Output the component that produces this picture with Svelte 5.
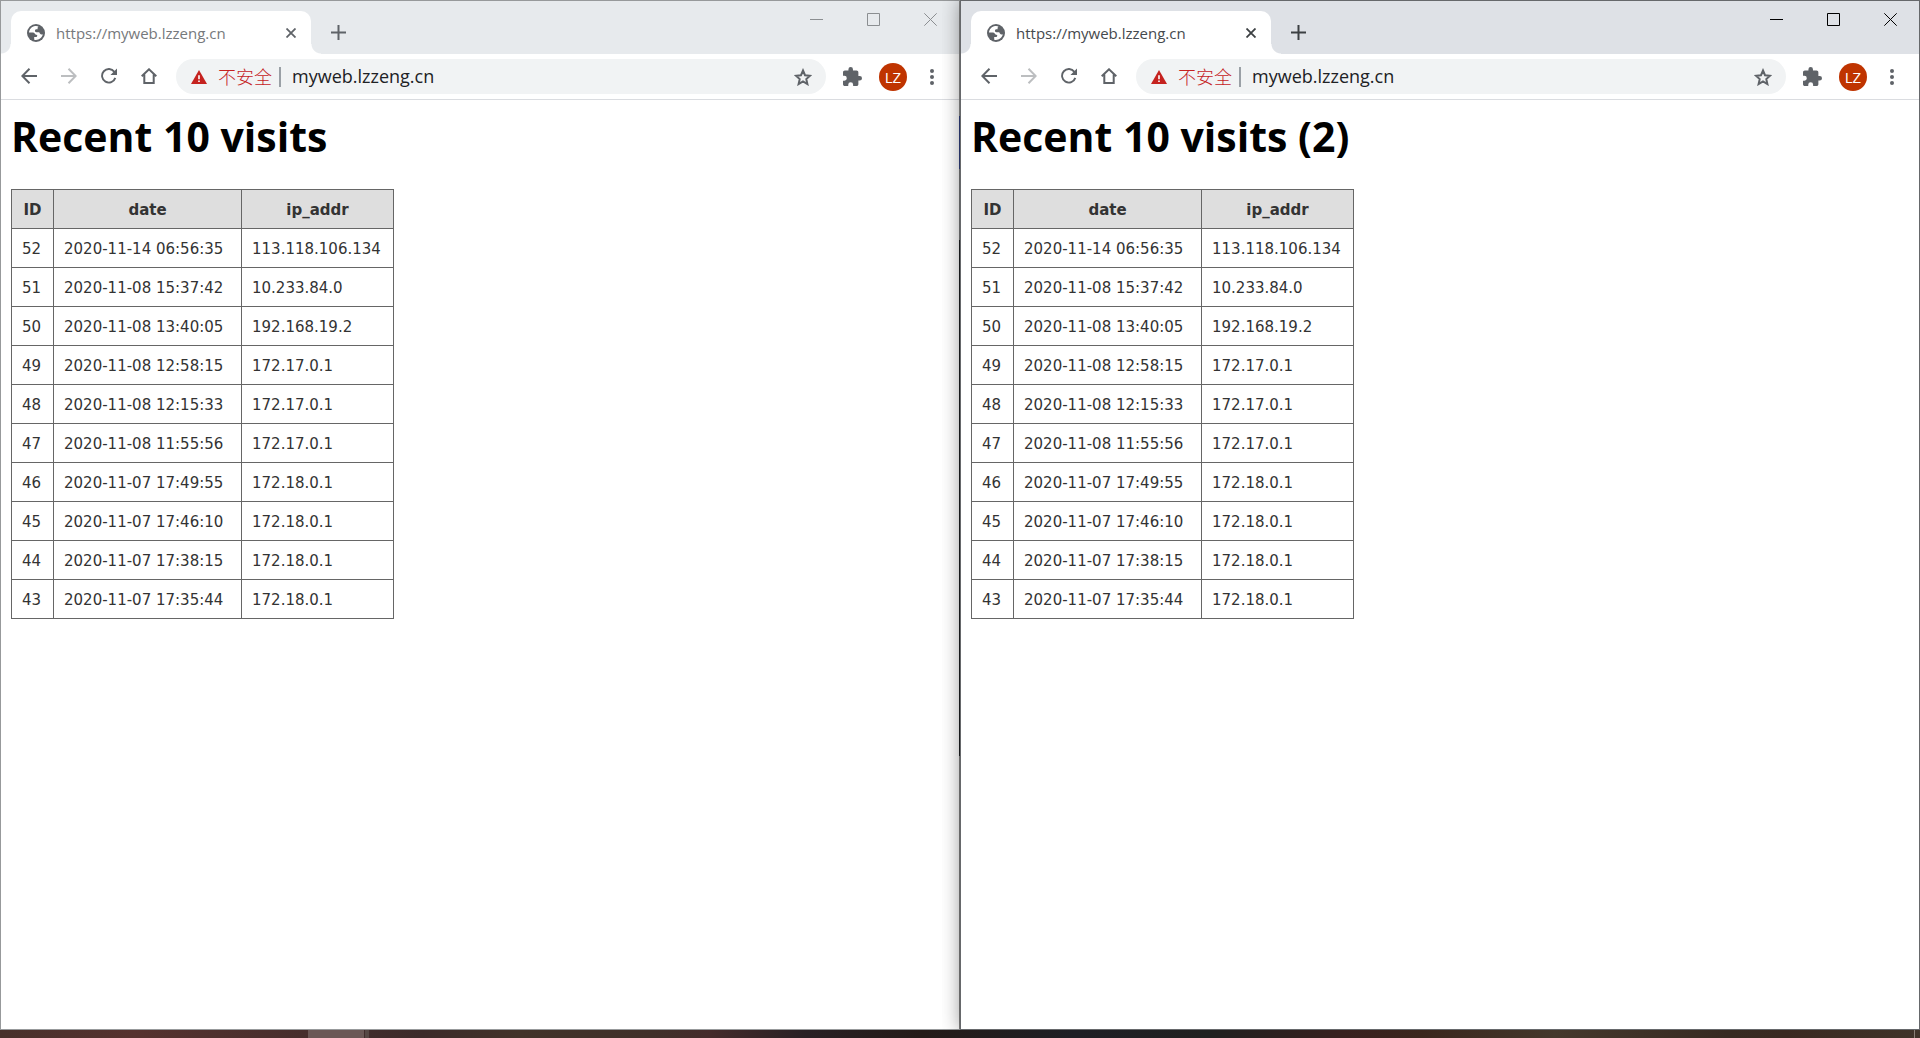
<script>
  const visits = [
    [52, '2020-11-14 06:56:35', '113.118.106.134'],
    [51, '2020-11-08 15:37:42', '10.233.84.0'],
    [50, '2020-11-08 13:40:05', '192.168.19.2'],
    [49, '2020-11-08 12:58:15', '172.17.0.1'],
    [48, '2020-11-08 12:15:33', '172.17.0.1'],
    [47, '2020-11-08 11:55:56', '172.17.0.1'],
    [46, '2020-11-07 17:49:55', '172.18.0.1'],
    [45, '2020-11-07 17:46:10', '172.18.0.1'],
    [44, '2020-11-07 17:38:15', '172.18.0.1'],
    [43, '2020-11-07 17:35:44', '172.18.0.1'],
  ];
  const windows = [
    { id: 'first', title: 'Recent 10 visits', active: false },
    { id: 'second', title: 'Recent 10 visits (2)', active: true },
  ];
</script>

<div class="desktop">
  <div class="windows">
    {#each windows as win (win.id)}
      <section class="window" class:active={win.active} aria-label={win.title}>
        <div class="tabstrip">
          <div class="tab">
            <svg class="globe" viewBox="0 0 18 18" aria-hidden="true">
              <circle cx="9" cy="9" r="9" fill="#5f6368" />
              <path fill="#fff" d="M8.200 2.100C4.900 2.500 2.200 5.300 2 8.600h3.400c1.200 0 2.400.6 2.800 1.700.3.500 1.900.2 2.100 1.200.1.900-.5 1.500-1.400 1.500H7.200v2.700c3.900 1 7.900-1.600 8.600-5.500l-.7.200c-1 .2-1.700-.2-2.200-1l-.7-1.100H9.500C8.400 8.300 7.900 7.600 8 6.600c0-.8.600-1.400 1.400-1.400h1.200V4.100c0-.8.400-1.300 1-1.600a7 7 0 0 0-3.400-.4z" />
            </svg>
            <span class="tabtitle">https://myweb.lzzeng.cn</span>
            <button class="tabclose" aria-label="关闭标签页">
              <svg viewBox="0 0 10 10" width="10" height="10"><path d="M.5.5l9 9m0-9l-9 9" stroke="currentColor" stroke-width="1.800" /></svg>
            </button>
          </div>
          <button class="newtab" aria-label="新标签页">
            <svg viewBox="0 0 15 15" width="15" height="15"><path d="M7.500 0v15M0 7.500h15" stroke="currentColor" stroke-width="2" /></svg>
          </button>
          <div class="controls">
            <button aria-label="最小化"><svg viewBox="0 0 13 13"><path d="M0 6.500h13" /></svg></button>
            <button aria-label="最大化"><svg viewBox="0 0 13 13"><path d="M.5.5h12v12H.5z" /></svg></button>
            <button aria-label="关闭"><svg viewBox="0 0 13 13"><path d="M.3.300l12.400 12.400m0-12.400L.3 12.700" /></svg></button>
          </div>
        </div>

        <div class="toolbar">
          <button class="nav" aria-label="后退"><svg viewBox="0 0 16 16"><path d="M16 8H1.500M8.500.8L1.300 8l7.200 7.200" /></svg></button>
          <button class="nav off" aria-label="前进"><svg viewBox="0 0 16 16"><path d="M0 8h14.500M7.500.8L14.700 8l-7.200 7.200" /></svg></button>
          <button class="nav" aria-label="重新加载">
            <svg viewBox="0 0 17 16"><path d="M14.200 3.600A7.200 7.200 0 1 0 15.200 10" /><path class="solid" d="M17 0v7h-7z" /></svg>
          </button>
          <button class="nav" aria-label="主页">
            <svg viewBox="0 0 16 16"><path d="M.7 8.200L8 1.300l7.300 6.900M3.300 6.500v8.500h9.400V6.500" /></svg>
          </button>
          <div class="omnibox">
            <svg class="warn" viewBox="0 0 16 14" aria-hidden="true"><path fill="#c5221f" d="M8 0l8 14H0z" /><path fill="#fff" d="M7.200 5.200h1.600v4H7.200zM7.200 10.400h1.600V12H7.200z" /></svg>
            <span class="unsafe">不安全</span>
            <span class="divider"></span>
            <input aria-label="地址" value="myweb.lzzeng.cn" />
            <button class="star" aria-label="收藏">
              <svg viewBox="0 0 18 17"><path d="M9 2l2 4.700 5.100.5-3.800 3.400 1.100 5L9 13l-4.400 2.600 1.100-5-3.800-3.400 5.100-.5z" /></svg>
            </button>
          </div>
          <button class="tool" aria-label="扩展程序">
            <svg viewBox="2 1 21 21" width="19" height="19"><path fill="#5f6368" d="M20.500 11H19V7c0-1.100-.9-2-2-2h-4V3.500a2.500 2.500 0 0 0-5 0V5H4c-1.100 0-2 .9-2 2v3.800h1.500a2.700 2.700 0 0 1 0 5.400H2V20c0 1.100.9 2 2 2h3.800v-1.500a2.700 2.700 0 0 1 5.400 0V22H17c1.100 0 2-.9 2-2v-4h1.500a2.500 2.500 0 0 0 0-5z" /></svg>
          </button>
          <button class="avatar" aria-label="用户 LZ">LZ</button>
          <button class="menu" aria-label="更多"><svg viewBox="0 0 4 16" width="4" height="16"><circle cx="2" cy="2" r="2" /><circle cx="2" cy="8" r="2" /><circle cx="2" cy="14" r="2" /></svg></button>
        </div>

        <main>
          <h1>{win.title}</h1>
          <table>
            <thead>
              <tr><th class="id">ID</th><th class="date">date</th><th class="ip">ip_addr</th></tr>
            </thead>
            <tbody>
              {#each visits as [id, date, ip] (id)}
                <tr><td>{id}</td><td>{date}</td><td>{ip}</td></tr>
              {/each}
            </tbody>
          </table>
        </main>
      </section>
    {/each}
  </div>
  <div class="taskbar"><span class="task"></span><span class="task-edge"></span><span class="peek"></span></div>
</div>

<style>
  :global(body) { margin: 0; }
  .desktop {
    height: 100vh;
    display: flex;
    flex-direction: column;
    font-family: 'Open Sans', 'Noto Sans', 'Noto Sans CJK SC', sans-serif;
    overflow: hidden;
  }
  .windows { flex: 1; display: grid; grid-template-columns: 1fr 1fr; min-height: 0; }
  .window {
    box-sizing: border-box;
    display: flex;
    flex-direction: column;
    min-width: 0;
    /* The last column shows slivers of what lies behind the window. */
    padding-right: 1px;
    background:
      linear-gradient(#8b8b8b 115px, #2f3f7c 115px 168px, #77797a 168px 239px, #1c1f22 239px 755px, #838383 755px)
      right / 1px 100% no-repeat,
      #fff;
    border: 1px solid #97999b;
    border-right: 0;
    --strip: #e7eaed;
    --ctl: #8b8e91;
    --title: #76797c;
  }
  .window.active {
    --strip: #dee1e6;
    --ctl: #000;
    --title: #45494d;
    padding-right: 0;
    background: #fff;
    border: 1px solid #66686b;
    box-shadow: 0 0 18px rgba(0, 0, 0, 0.4);
    clip-path: inset(0 0 0 -18px);
  }
  button {
    display: flex;
    align-items: center;
    justify-content: center;
    padding: 0;
    border: 0;
    background: none;
    font: inherit;
    color: #5f6368;
    flex: none;
  }
  svg { display: block; flex: none; }
  .tabstrip { display: flex; height: 53px; background: var(--strip); flex: none; }
  .tab {
    position: relative;
    box-sizing: border-box;
    display: flex;
    align-items: center;
    width: 300px;
    height: 43px;
    margin: 10px 0 0 10px;
    padding: 0 10px 0 16px;
    border-radius: 10px 10px 0 0;
    background: #fff;
  }
  .tab::before,
  .tab::after {
    content: '';
    position: absolute;
    bottom: 0;
    width: 10px;
    height: 10px;
  }
  .tab::before { right: 100%; background: radial-gradient(circle at 0 0, var(--strip) 9px, #fff 10px); }
  .tab::after { left: 100%; background: radial-gradient(circle at 100% 0, var(--strip) 9px, #fff 10px); }
  .globe { width: 18px; height: 18px; }
  .tabtitle { flex: 1; margin-left: 11px; font-size: 15px; line-height: 20px; color: var(--title); }
  .tabclose { width: 20px; height: 20px; }
  .newtab { width: 35px; height: 43px; margin: 10px 0 0 10px; }
  .active .newtab, .active .tabclose { color: #3c4043; }
  .controls { display: flex; margin-left: auto; height: 37px; }
  .controls button { width: 57px; }
  .controls svg { width: 13px; height: 13px; fill: none; stroke: var(--ctl); stroke-width: 1; }
  .toolbar {
    display: flex;
    align-items: center;
    height: 45px;
    padding: 0 17px 0 8px;
    border-bottom: 1px solid #dadce0;
    flex: none;
  }
  .nav { width: 40px; height: 39px; padding-bottom: 1px; }
  .nav svg { width: 16px; height: 16px; fill: none; stroke: #5f6368; stroke-width: 2; }
  .nav .solid { fill: #5f6368; stroke: none; }
  .nav.off svg { stroke: #bcbec0; }
  .omnibox {
    box-sizing: border-box;
    display: flex;
    align-items: center;
    flex: 1;
    min-width: 0;
    height: 35px;
    margin-left: 7px;
    padding: 0 14px 0 15px;
    border-radius: 18px;
    background: #f1f3f4;
  }
  .warn { width: 16px; height: 14px; }
  .unsafe {
    margin-left: 11px;
    padding-bottom: 2px;
    font-family: 'Noto Sans CJK SC', sans-serif;
    font-size: 18px;
    font-weight: 300;
    line-height: 24px;
    color: #c5221f;
  }
  .divider { width: 2px; height: 20px; margin: 0 11px 0 7px; background: #9aa0a6; }
  input {
    flex: 1;
    min-width: 0;
    padding: 0 0 2px;
    border: 0;
    outline: 0;
    background: none;
    color: #202124;
    font: inherit;
    font-size: 18px;
    line-height: 24px;
  }
  .star svg { width: 18px; height: 18px; fill: none; stroke: #5f6368; stroke-width: 2; }
  .tool { width: 20px; height: 20px; margin-left: 16px; }
  .avatar { width: 28px; height: 28px; margin-left: 17px; border-radius: 50%; background: #bf3400; color: #fff; font-size: 15px; }
  .menu { width: 20px; height: 28px; margin-left: 15px; }
  .menu svg { fill: #5f6368; }
  main { padding: 10px; }
  h1 { margin: 0 0 27px; font-size: 41px; line-height: 52px; font-weight: 700; color: #000; }
  table {
    border-collapse: collapse;
    color: #333;
    font-family: 'DejaVu Sans', sans-serif;
    font-size: 15px;
    line-height: 18px;
  }
  th, td { padding: 11px 10px 9px; border: 1px solid #666; text-align: left; white-space: nowrap; }
  th { background: #dedede; text-align: center; }
  .id { min-width: 21px; }
  .date { min-width: 167px; }
  .ip { min-width: 131px; }
  .taskbar {
    display: flex;
    height: 8px;
    flex: none;
    background: linear-gradient(90deg, #48302b, #56322f 7%, #432d2c 18%, #3c2a2a 22%, #42332a 27%, #40302a 34%, #442b2b 37%, #292024 42%, #241b18 48%, #1f1f25 56%, #202120 63%, #38211f 70%, #3b261d 74%, #44382c 81%, #382a22 90%, #3a2921 93%, #40342a);
  }
  .task { width: 56px; margin-left: 308px; background: #6b5856; }
  .task-edge { width: 4px; margin-left: 1px; background: #564744; }
  .peek { width: 1px; margin: 0 5px 0 auto; background: #8a8078; }
</style>
